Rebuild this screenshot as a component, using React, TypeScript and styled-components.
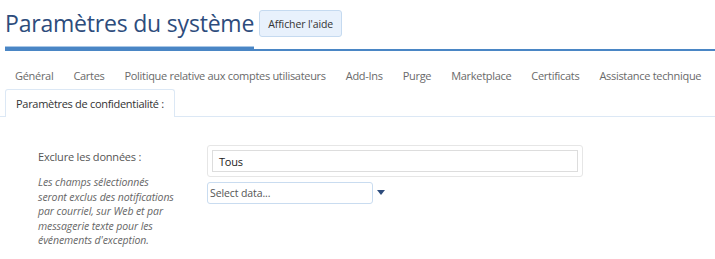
import React from "react"
import styled, { createGlobalStyle } from "styled-components"

const GlobalStyle = createGlobalStyle`
  body {
    margin: 0;
    background: #ffffff;
    font-family: "Open Sans", "Noto Sans", sans-serif;
  }
`

const tabs = [
  "Général",
  "Cartes",
  "Politique relative aux comptes utilisateurs",
  "Add-Ins",
  "Purge",
  "Marketplace",
  "Certificats",
  "Assistance technique",
]

const App = () => {
  return (
    <Page>
      <GlobalStyle />
      <Header>
        <TitleBlock>
          <Title>Paramètres du système</Title>
        </TitleBlock>
        <HeaderRest>
          <HelpButton>Afficher l'aide</HelpButton>
        </HeaderRest>
      </Header>

      <TabList>
        {tabs.map(t => (
          <Tab key={t}>{t}</Tab>
        ))}
        <Tab active>Paramètres de confidentialité :</Tab>
      </TabList>

      <Form>
        <Label>Exclure les données :</Label>
        <TagBox>
          <TagInput>Tous</TagInput>
        </TagBox>
        <HelpText>
          Les champs sélectionnés seront exclus des notifications par
          courriel, sur Web et par messagerie texte pour les événements
          d'exception.
        </HelpText>
        <SelectRow>
          <SelectBox>Select data...</SelectBox>
          <Caret />
        </SelectRow>
      </Form>
    </Page>
  )
}

const Page = styled.div`
  width: 715px;
`

const Header = styled.div`
  display: flex;
  padding-left: 5px;
`

const TitleBlock = styled.div`
  border-bottom: 4px solid #4a86c5;
  box-shadow: inset 0 -5px 0 -4px #a9c7e6;
`

const Title = styled.h1`
  margin: 0;
  padding: 6px 0 6px;
  font-size: 23px;
  font-weight: 400;
  line-height: 35px;
  color: #2d4c7c;
  letter-spacing: -0.2px;
`

const HeaderRest = styled.div`
  flex: 1;
  display: flex;
  align-items: flex-start;
  padding: 10px 0 0 5px;
  border-bottom: 2px solid #4a86c5;
`

const HelpButton = styled.button`
  height: 27px;
  width: 83px;
  padding: 0;
  font-family: inherit;
  font-size: 10.5px;
  letter-spacing: -0.1px;
  color: #333333;
  background: #e8f1fc;
  border: 1px solid #c5daf0;
  border-radius: 3px;
`

const TabList = styled.div`
  display: flex;
  flex-wrap: wrap;
  margin-top: 10px;
  padding-left: 5px;
  border-bottom: 1px solid #dce8f5;
`

const Tab = styled.div<{ active?: boolean }>`
  height: 28px;
  box-sizing: border-box;
  padding: 0 ${p => (p.active ? "10px" : "9px")};
  display: flex;
  align-items: center;
  font-size: 11px;
  letter-spacing: -0.3px;
  white-space: nowrap;
  color: ${p => (p.active ? "#333333" : "#6a6a6a")};
  border: 1px solid ${p => (p.active ? "#dce8f5" : "transparent")};
  border-bottom: none;
  border-radius: 3px 3px 0 0;
  margin-bottom: ${p => (p.active ? "-1px" : "0")};
  background: #ffffff;
`

const Form = styled.div`
  display: grid;
  grid-template-columns: 169px 376px;
  row-gap: 0;
  padding: 28px 0 0 38px;
`

const Label = styled.div`
  font-size: 11px;
  letter-spacing: -0.2px;
  color: #555555;
  padding-top: 4px;
`

const TagBox = styled.div`
  border: 1px solid #e6e6e6;
  border-radius: 3px;
  padding: 4px;
`

const TagInput = styled.div`
  height: 22px;
  box-sizing: border-box;
  border: 1px solid #dddddd;
  padding: 0 6px;
  display: flex;
  align-items: center;
  font-size: 11px;
  letter-spacing: -0.2px;
  color: #222222;
`

const HelpText = styled.div`
  width: 140px;
  margin-top: -2px;
  font-size: 10.5px;
  font-style: italic;
  letter-spacing: -0.1px;
  line-height: 14.5px;
  color: #666666;
`

const SelectRow = styled.div`
  display: flex;
  align-items: flex-start;
  gap: 4px;
  padding-top: 5px;
`

const SelectBox = styled.div`
  width: 166px;
  height: 22px;
  box-sizing: border-box;
  border: 1px solid #c9dcf0;
  border-radius: 3px;
  padding: 0 2px;
  display: flex;
  align-items: center;
  font-size: 10.5px;
  letter-spacing: -0.1px;
  color: #555555;
`

const Caret = styled.div`
  margin-top: 8px;
  width: 0;
  height: 0;
  border-left: 4px solid transparent;
  border-right: 4px solid transparent;
  border-top: 5px solid #2d4c7c;
`

export default App
